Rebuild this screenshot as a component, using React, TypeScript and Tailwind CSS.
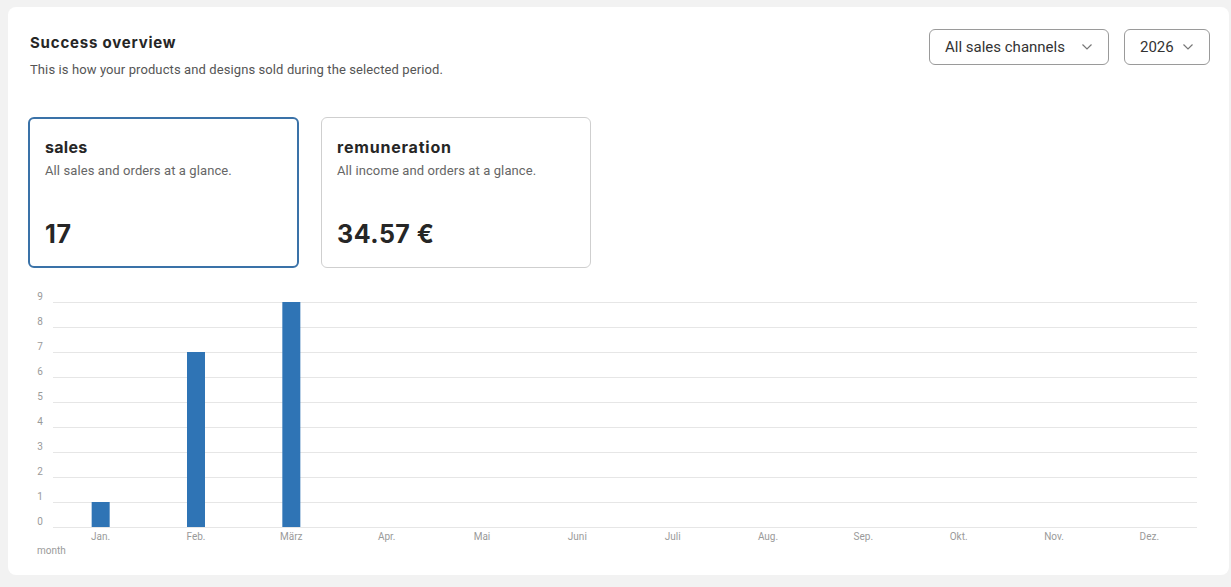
import React from "react";

const months = ["Jan.", "Feb.", "März", "Apr.", "Mai", "Juni", "Juli", "Aug.", "Sep.", "Okt.", "Nov.", "Dez."];
const values = [1, 7, 9, 0, 0, 0, 0, 0, 0, 0, 0, 0];

function Chevron() {
  return (
    <svg width="12" height="8" viewBox="0 0 12 8" fill="none">
      <polyline points="1.5,1.5 6,6 10.5,1.5" stroke="#777" strokeWidth="1.2" fill="none" />
    </svg>
  );
}

function Chart() {
  const x0 = 45;
  const x1 = 1189;
  const step = (x1 - x0) / 12;
  const yZero = 242;
  const unit = 25;
  return (
    <svg width="1221" height="280" viewBox="0 0 1221 280" className="block">
      {Array.from({ length: 10 }).map((_, i) => {
        const y = yZero - i * unit;
        return (
          <g key={i}>
            <line x1={x0} x2={x1} y1={y + 0.5} y2={y + 0.5} stroke="#e6e6e6" strokeWidth="1" />
            <text x={32} y={y - 2} textAnchor="middle" fontSize="10" fill="#9a9a9a" fontFamily="Roboto, sans-serif">
              {i}
            </text>
          </g>
        );
      })}
      {values.map((v, i) => {
        const cx = x0 + step * i + step / 2;
        return v > 0 ? (
          <rect key={i} x={cx - 9} y={yZero - v * unit} width={18} height={v * unit} fill="#2f74b5" />
        ) : null;
      })}
      {months.map((m, i) => {
        const cx = x0 + step * i + step / 2;
        return (
          <text key={m} x={cx} y={255} textAnchor="middle" fontSize="10" fill="#9a9a9a" fontFamily="Roboto, sans-serif">
            {m}
          </text>
        );
      })}
      <text x={29} y={269} fontSize="10" fill="#9a9a9a" fontFamily="Roboto, sans-serif">
        month
      </text>
    </svg>
  );
}

export default function App() {
  return (
    <div className="w-full h-[587px] bg-[#f2f2f2] pt-[7px] pl-[8px] pr-[2px] font-['Roboto',sans-serif]">
      <div className="bg-white rounded-[8px] h-[568px] relative">
        <div className="flex justify-between items-start pt-[22px] pl-[22px] pr-[19px]">
          <div className="mt-[4px]">
            <div className="text-[15px] leading-[20px] font-bold text-[#262626] font-['Inter',sans-serif] tracking-[0.8px]">
              Success overview
            </div>
            <div className="mt-[9px] text-[13px] leading-[16px] text-[#555] tracking-[0.1px]">
              This is how your products and designs sold during the selected period.
            </div>
          </div>
          <div className="flex gap-[15px]">
            <div className="w-[180px] h-[36px] border border-[#9a9a9a] rounded-[6px] flex items-center justify-between pl-[15px] pr-[15px] text-[15px] text-[#333]">
              <span>All sales channels</span>
              <Chevron />
            </div>
            <div className="w-[86px] h-[36px] border border-[#9a9a9a] rounded-[6px] flex items-center justify-between pl-[15px] pr-[15px] text-[15px] text-[#333]">
              <span>2026</span>
              <Chevron />
            </div>
          </div>
        </div>
        <div className="flex gap-[22px] mt-[39px] ml-[20px]">
          <div className="w-[271px] h-[151px] border-2 border-[#3a72a8] rounded-[6px] px-[15px] pt-[18px]">
            <div className="text-[16px] leading-[20px] font-bold text-[#262626] font-['Inter',sans-serif] tracking-[0.3px]">sales</div>
            <div className="mt-[5px] text-[13px] leading-[18px] text-[#666] tracking-[0.1px]">All sales and orders at a glance.</div>
            <div className="mt-[39px] text-[25px] leading-[30px] font-bold text-[#262626] font-['Inter',sans-serif] tracking-[0.8px]">17</div>
          </div>
          <div className="w-[270px] h-[151px] border border-[#cfcfcf] rounded-[6px] px-[15px] pt-[19px]">
            <div className="text-[16px] leading-[20px] font-bold text-[#262626] font-['Inter',sans-serif] tracking-[0.8px]">remuneration</div>
            <div className="mt-[5px] text-[13px] leading-[18px] text-[#666] tracking-[0.1px]">All income and orders at a glance.</div>
            <div className="mt-[39px] text-[25px] leading-[30px] font-bold text-[#262626] font-['Inter',sans-serif] tracking-[0.5px]">34.57 €</div>
          </div>
        </div>
        <div className="mt-[17px]">
          <Chart />
        </div>
      </div>
    </div>
  );
}
